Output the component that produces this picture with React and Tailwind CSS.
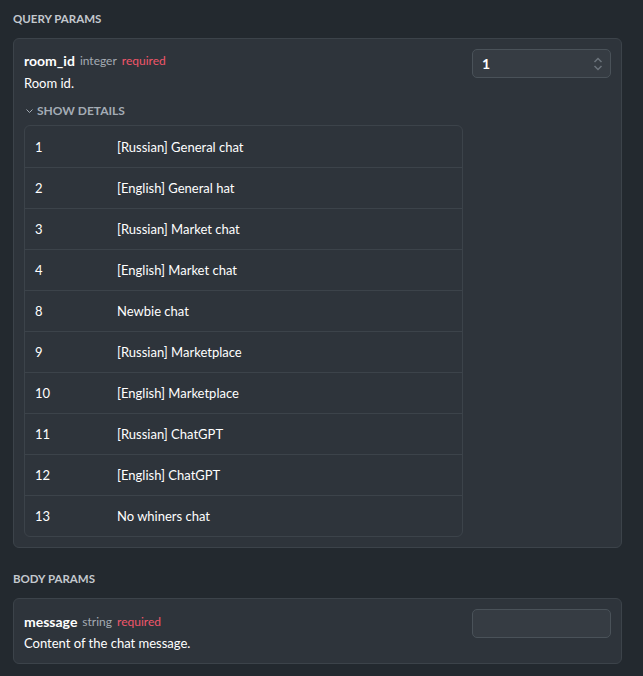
import React from "react";

const rows = [
  ["1", "[Russian] General chat"],
  ["2", "[English] General hat"],
  ["3", "[Russian] Market chat"],
  ["4", "[English] Market chat"],
  ["8", "Newbie chat"],
  ["9", "[Russian] Marketplace"],
  ["10", "[English] Marketplace"],
  ["11", "[Russian] ChatGPT"],
  ["12", "[English] ChatGPT"],
  ["13", "No whiners chat"],
];

export default function App() {
  return (
    <div
      className="w-[643px] h-[676px] bg-[#23292f] text-[#e8eaed] overflow-hidden pl-[13px] pr-[21px]"
      style={{ fontFamily: 'Lato, "Noto Sans", sans-serif' }}
    >
      <div className="h-[38px] flex items-center text-[11.5px] font-bold text-[#c3c8ce]">
        QUERY PARAMS
      </div>
      <div className="rounded-[6px] border border-[#3c434a] bg-[#2e343b] p-[10px] flex gap-[9px]">
        <div className="w-[439px] flex flex-col">
          <div className="flex items-center gap-[5px] h-[22px] pt-[1px]">
            <span className="text-[14px] font-bold text-white">room_id</span>
            <span className="text-[12px] text-[#a4abb3] mt-[1px]">integer</span>
            <span className="text-[12px] text-[#f0566a] mt-[1px]">required</span>
          </div>
          <div className="h-[24px] flex items-center pt-[2px] text-[13px] text-white">Room id.</div>
          <div className="h-[30px] flex items-center pt-[2px] text-[12px] font-bold text-[#a4acb5] gap-[3px]">
            <svg width="9" height="8" viewBox="0 0 9 8" className="ml-[1px]">
              <path d="M1.5 2.5 L4.5 5.5 L7.5 2.5" stroke="#a4acb5" strokeWidth="1" fill="none" />
            </svg>
            SHOW DETAILS
          </div>
          <div className="rounded-[6px] border border-[#3c434a] flex flex-col">
            {rows.map(([id, name], i) => (
              <div
                key={id}
                className={`h-[41px] flex items-center pt-[2px] text-[13px] text-white ${i > 0 ? "border-t border-[#3c434a]" : ""}`}
              >
                <div className="w-[92px] pl-[10px]">{id}</div>
                <div>{name}</div>
              </div>
            ))}
          </div>
        </div>
        <div className="flex-1">
          <div className="h-[29px] rounded-[5px] border border-[#4a5259] bg-[#363c43] flex items-center justify-between pl-[9px] pr-[6px]">
            <span className="text-[14px] font-bold text-white">1</span>
            <svg width="12" height="18" viewBox="0 0 12 18">
              <path d="M2.5 7 L6 3.5 L9.5 7 M2.5 11 L6 14.5 L9.5 11" stroke="#6b737b" strokeWidth="1.5" fill="none" />
            </svg>
          </div>
        </div>
      </div>
      <div className="h-[50px] flex items-center pt-[11px] text-[11.5px] font-bold text-[#c3c8ce]">
        BODY PARAMS
      </div>
      <div className="rounded-[6px] border border-[#3c434a] bg-[#2e343b] p-[10px] flex gap-[9px]">
        <div className="w-[439px] flex flex-col">
          <div className="flex items-center gap-[5px] h-[23px] pt-[1px]">
            <span className="text-[14px] font-bold text-white">message</span>
            <span className="text-[12px] text-[#a4abb3] mt-[1px]">string</span>
            <span className="text-[12px] text-[#f0566a] mt-[1px]">required</span>
          </div>
          <div className="h-[21px] flex items-center pt-[2px] text-[13px] text-white">Content of the chat message.</div>
        </div>
        <div className="flex-1">
          <div className="h-[29px] rounded-[5px] border border-[#4a5259] bg-[#363c43]" />
        </div>
      </div>
    </div>
  );
}
